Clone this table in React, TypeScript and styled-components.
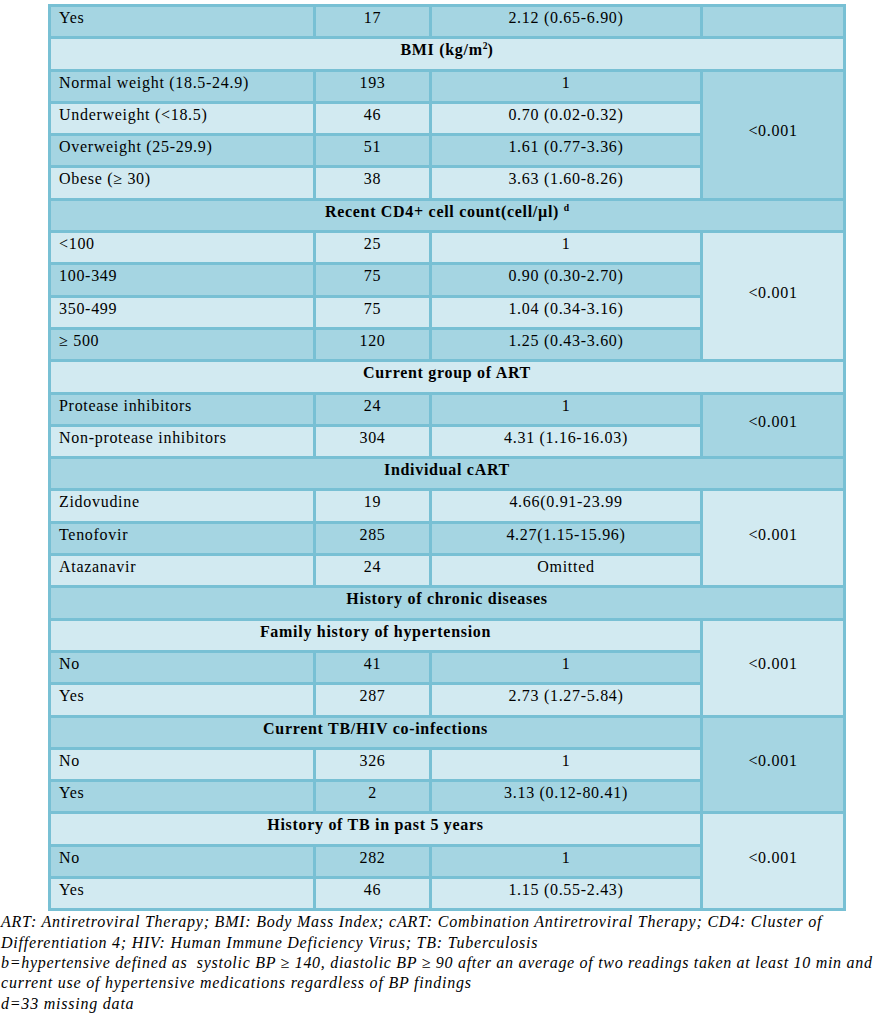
import React from "react";
import styled, { createGlobalStyle } from "styled-components";

const SERIF = `"Liberation Serif", "Times New Roman", Tinos, "DejaVu Serif", serif`;

const Global = createGlobalStyle`
  html, body { margin: 0; padding: 0; background: #ffffff; }
  body { font-family: ${SERIF}; color: #000; }
`;

const DARK = "#A5D5E2";
const LIGHT = "#D2EAF1";
const LINE = "#78C0D4";

const Page = styled.div`
  width: 875px;
  padding-top: 4px;
  font-family: ${SERIF};
`;

const Table = styled.table`
  margin-left: 48px;
  width: 798px;
  table-layout: fixed;
  border-collapse: separate;
  border-spacing: 3px;
  background: ${LINE};
  font-family: ${SERIF};
  font-size: 16px;
  line-height: 18px;
  letter-spacing: 0.7px;
`;

const Cell = styled.td<{ $tone: "dark" | "light"; $align?: "left" | "center"; $middle?: boolean; $bold?: boolean }>`
  background: ${(p) => (p.$tone === "dark" ? DARK : LIGHT)};
  padding: 2px 8px 9.3px 8px;
  font-family: ${SERIF};
  text-align: ${(p) => p.$align ?? "center"};
  vertical-align: ${(p) => (p.$middle ? "middle" : "top")};
  font-weight: ${(p) => (p.$bold ? 700 : 400)};
  white-space: nowrap;
  overflow: visible;
`;

const Sup = styled.sup`
  font-size: 0.6em;
  line-height: 0;
  vertical-align: 0.65em;
  letter-spacing: 0;
`;

const Notes = styled.div`
  margin-top: 1px;
  padding-left: 1px;
  font-family: ${SERIF};
  font-style: italic;
  font-size: 16px;
  line-height: 20.3px;
  white-space: nowrap;
`;

const NoteLine = styled.div<{ $spacing?: number }>`
  letter-spacing: ${(p) => p.$spacing ?? 0.78}px;
`;

type Tone = "dark" | "light";
type PCell = { text: string; span: number } | "empty" | null;

type Row =
  | { kind: "data"; label: React.ReactNode; n: string; or: string; p: PCell }
  | { kind: "head"; text: React.ReactNode; span: 3 | 4; p: PCell };

const rows: Row[] = [
  { kind: "data", label: "Yes", n: "17", or: "2.12 (0.65-6.90)", p: "empty" },
  { kind: "head", text: <>BMI (kg/m<Sup>2</Sup>)</>, span: 4, p: null },
  { kind: "data", label: "Normal weight (18.5-24.9)", n: "193", or: "1", p: { text: "<0.001", span: 4 } },
  { kind: "data", label: "Underweight (<18.5)", n: "46", or: "0.70 (0.02-0.32)", p: null },
  { kind: "data", label: "Overweight (25-29.9)", n: "51", or: "1.61 (0.77-3.36)", p: null },
  { kind: "data", label: "Obese (\u2265 30)", n: "38", or: "3.63 (1.60-8.26)", p: null },
  { kind: "head", text: <>Recent CD4+ cell count(cell/µl) <Sup>d</Sup></>, span: 4, p: null },
  { kind: "data", label: "<100", n: "25", or: "1", p: { text: "<0.001", span: 4 } },
  { kind: "data", label: "100-349", n: "75", or: "0.90 (0.30-2.70)", p: null },
  { kind: "data", label: "350-499", n: "75", or: "1.04 (0.34-3.16)", p: null },
  { kind: "data", label: "\u2265 500", n: "120", or: "1.25 (0.43-3.60)", p: null },
  { kind: "head", text: "Current group of ART", span: 4, p: null },
  { kind: "data", label: "Protease inhibitors", n: "24", or: "1", p: { text: "<0.001", span: 2 } },
  { kind: "data", label: "Non-protease inhibitors", n: "304", or: "4.31 (1.16-16.03)", p: null },
  { kind: "head", text: "Individual cART", span: 4, p: null },
  { kind: "data", label: "Zidovudine", n: "19", or: "4.66(0.91-23.99", p: { text: "<0.001", span: 3 } },
  { kind: "data", label: "Tenofovir", n: "285", or: "4.27(1.15-15.96)", p: null },
  { kind: "data", label: "Atazanavir", n: "24", or: "Omitted", p: null },
  { kind: "head", text: "History of chronic diseases", span: 4, p: null },
  { kind: "head", text: "Family history of hypertension", span: 3, p: { text: "<0.001", span: 3 } },
  { kind: "data", label: "No", n: "41", or: "1", p: null },
  { kind: "data", label: "Yes", n: "287", or: "2.73 (1.27-5.84)", p: null },
  { kind: "head", text: "Current TB/HIV co-infections", span: 3, p: { text: "<0.001", span: 3 } },
  { kind: "data", label: "No", n: "326", or: "1", p: null },
  { kind: "data", label: "Yes", n: "2", or: "3.13 (0.12-80.41)", p: null },
  { kind: "head", text: "History of TB in past 5 years", span: 3, p: { text: "<0.001", span: 3 } },
  { kind: "data", label: "No", n: "282", or: "1", p: null },
  { kind: "data", label: "Yes", n: "46", or: "1.15 (0.55-2.43)", p: null },
];

function renderP(p: PCell, tone: Tone) {
  if (p === null) return null;
  if (p === "empty") return <Cell $tone={tone} />;
  return (
    <Cell $tone={tone} rowSpan={p.span} $middle>
      {p.text}
    </Cell>
  );
}

export default function App() {
  return (
    <Page>
      <Global />
      <Table>
        <colgroup>
          <col style={{ width: 262 }} />
          <col style={{ width: 113 }} />
          <col style={{ width: 268 }} />
          <col style={{ width: 140 }} />
        </colgroup>
        <tbody>
          {rows.map((r, i) => {
            const tone: Tone = i % 2 === 0 ? "dark" : "light";
            if (r.kind === "head") {
              return (
                <tr key={i}>
                  <Cell $tone={tone} colSpan={r.span} $bold>
                    {r.text}
                  </Cell>
                  {renderP(r.p, tone)}
                </tr>
              );
            }
            return (
              <tr key={i}>
                <Cell $tone={tone} $align="left">{r.label}</Cell>
                <Cell $tone={tone}>{r.n}</Cell>
                <Cell $tone={tone}>{r.or}</Cell>
                {renderP(r.p, tone)}
              </tr>
            );
          })}
        </tbody>
      </Table>
      <Notes>
        <NoteLine>
          ART: Antiretroviral Therapy; BMI: Body Mass Index; cART: Combination Antiretroviral Therapy; CD4: Cluster of
        </NoteLine>
        <NoteLine>Differentiation 4; HIV: Human Immune Deficiency Virus; TB: Tuberculosis</NoteLine>
        <NoteLine $spacing={0.7}>
          b=hypertensive defined as&nbsp; systolic BP ≥ 140, diastolic BP ≥ 90 after an average of two readings taken at least 10 min and
        </NoteLine>
        <NoteLine>current use of hypertensive medications regardless of BP findings</NoteLine>
        <NoteLine>d=33 missing data</NoteLine>
      </Notes>
    </Page>
  );
}
